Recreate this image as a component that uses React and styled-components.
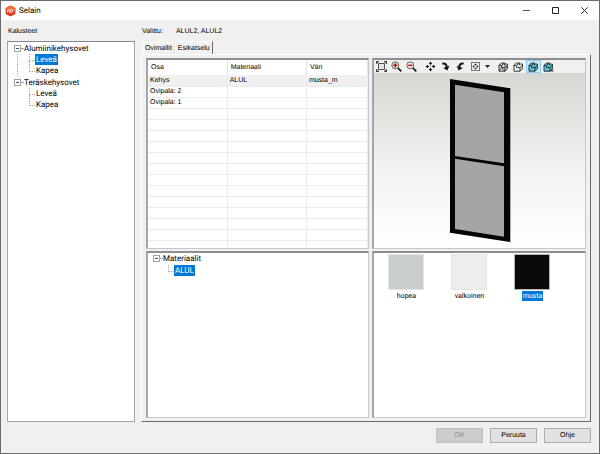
// App.jsx
import React, { useState } from 'react';
import styled, { createGlobalStyle } from 'styled-components';

const GlobalStyle = createGlobalStyle`
  * {
    box-sizing: border-box;
  }

  body {
    margin: 0;
    background-color: #f0f0f0;
    color: #000;
    font-family: "Liberation Sans", Arial, sans-serif;
    font-size: 7px;
    line-height: 9px;
    text-rendering: geometricPrecision;
  }

  button {
    margin: 0;
    padding: 0;
    border: none;
    background: none;
    color: inherit;
    font: inherit;
    text-rendering: inherit;
  }
`;

const Window = styled.div`
  display: flex;
  flex-direction: column;
  min-height: 100vh;
  border: 1px solid #6b6b6b;
  background-color: #f0f0f0;
`;

const TitleBar = styled.header`
  display: flex;
  align-items: center;
  height: 19px;
  padding-left: 4px;
  background-color: #fff;
`;

const WindowTitle = styled.h1`
  flex: 1;
  margin: 0 0 0 3px;
  font-family: Roboto, sans-serif;
  font-size: 8px;
  font-weight: normal;
`;

const WindowButton = styled.button`
  display: flex;
  align-items: center;
  justify-content: center;
  width: 29px;
  height: 19px;
`;

const Body = styled.main`
  flex: 1;
  display: grid;
  grid-template-columns: 128fr 450fr;
  column-gap: 6px;
  padding: 5px 8px 0 6px;
`;

const Column = styled.section`
  display: flex;
  flex-direction: column;
  min-width: 0;
`;

const Caption = styled.div`
  display: flex;
  gap: 13px;
  height: 16px;
  padding: 2px 1px 0;
`;

const Pane = styled.div`
  min-width: 0;
  min-height: 0;
  overflow: hidden;
  border: 1px solid #a3a6ad;
  border-top-color: #828790;
  background-color: #fff;
`;

const SunkenPane = styled(Pane)`
  border: 2px solid #c4c7ce;
  border-top-color: #8e8e92;
  border-left-color: #a4a6ac;
  border-right-width: 1px;
  border-bottom-width: 1px;
`;

const TreePane = styled(Pane)`
  flex: 1;
  padding-left: 6px;
`;

const MaterialPane = styled(SunkenPane)`
  padding-left: 5px;
`;

const TreeList = styled.ul`
  margin: 0;
  padding: 0;
  list-style: none;
  font-family: Roboto, sans-serif;
  font-size: 8px;
`;

const TreeRow = styled.div`
  display: flex;
  align-items: center;
  height: ${({ $head }) => ($head ? '12px' : '11px')};
`;

const Expander = styled.button`
  display: flex;
  align-items: center;
  justify-content: center;
  width: 7px;
  height: 7px;
  border: 1px solid #a0a0a0;
  background-color: #fff;

  &::before {
    content: '';
    width: 3px;
    height: 1px;
    background-color: #3c4f9c;
  }
`;

const Dash = styled.span`
  width: 2px;
  border-top: 1px dotted #a8a8a8;
`;

const Rail = styled.span`
  width: 12px;
  height: 11px;
  margin-left: 3px;
  border-left: 1px dotted ${({ $visible }) => ($visible ? '#a8a8a8' : 'transparent')};
`;

const Elbow = styled.span`
  display: flex;
  flex-direction: column;
  width: 6px;
  height: 11px;

  &::before {
    content: '';
    height: 6px;
    border-left: 1px dotted #a8a8a8;
    border-bottom: 1px dotted #a8a8a8;
  }

  &::after {
    content: '';
    flex: 1;
    border-left: 1px dotted ${({ $last }) => ($last ? 'transparent' : '#a8a8a8')};
  }
`;

const TreeLabel = styled.button`
  height: 11px;
  padding: 0 1px;
  line-height: 11px;
  white-space: nowrap;
  background-color: ${({ $selected }) => ($selected ? '#0078d7' : 'transparent')};
  color: ${({ $selected }) => ($selected ? '#fff' : '#000')};
`;

const TabList = styled.div`
  display: flex;
  align-items: flex-end;
  height: 13px;
  padding-left: 1px;
`;

const Tab = styled.button`
  height: ${({ $active }) => ($active ? '13px' : '12px')};
  padding: 0 2px;
  border-top: 1px solid #fff;
  border-left: 1px solid #fff;
  border-right: 1px solid ${({ $active }) => ($active ? '#696969' : '#dcdcdc')};
`;

const TabPanel = styled.div`
  flex: 1;
  display: grid;
  grid-template-columns: 224fr 214fr;
  grid-template-rows: 192fr 168fr;
  gap: 2px 3px;
  padding: 3px 4px 3px;
  border: 1px solid #fff;
  border-right-color: #696969;
  border-bottom-color: #696969;
`;

const PartsTable = styled.table`
  width: 100%;
  border-collapse: collapse;
  table-layout: fixed;
`;

const HeadCell = styled.th`
  width: ${({ $width }) => $width};
  height: 15px;
  padding: 0 3px;
  border-right: 1px solid #e4e4e4;
  font-weight: normal;
  text-align: left;
`;

const Row = styled.tr`
  background-color: ${({ $selected }) => ($selected ? '#f0f0f0' : '#fff')};
`;

const Cell = styled.td`
  height: 11px;
  padding: 0 2px;
  border-right: 1px solid #ececec;
  border-bottom: 1px solid #ececec;
  white-space: nowrap;
`;

const TableScroll = styled.div`
  height: 0;
  min-height: 100%;
  overflow: hidden;
`;

const Viewer = styled(SunkenPane)`
  display: flex;
  flex-direction: column;
`;

const Toolbar = styled.div`
  display: flex;
  align-items: center;
  height: 13px;
  background-color: #f0f0f0;
`;

const ToolButton = styled.button`
  display: flex;
  align-items: center;
  justify-content: center;
  width: ${({ $narrow }) => ($narrow ? '9px' : '15px')};
  height: 13px;
  border: 1px solid ${({ $active }) => ($active ? '#90c8f6' : 'transparent')};
  background-color: ${({ $active }) => ($active ? '#cce8ff' : 'transparent')};

  svg {
    flex-shrink: 0;
  }
`;

const ToolGap = styled.span`
  width: 4px;
`;

const Scene = styled.div`
  flex: 1;
  display: flex;
  justify-content: center;
  align-items: center;
  padding-top: 2px;
  background: linear-gradient(#d5d8d2, #f0f1ef 50%, #fff);
`;

const Swatches = styled.div`
  display: flex;
  flex-wrap: wrap;
  gap: 27px;
  padding: 1px 14px;
`;

const Swatch = styled.button`
  display: flex;
  flex-direction: column;
  align-items: center;
  gap: 1px;
  width: 36px;
  font-family: Roboto, sans-serif;
`;

const SwatchColor = styled.span`
  width: 36px;
  height: 36px;
  border: 1px solid ${({ $selected }) => ($selected ? '#b4b4b4' : '#e2e6e5')};
  background-color: ${({ $color }) => $color};
`;

const SwatchName = styled.span`
  padding: 0 1px;
  line-height: 10px;
  background-color: ${({ $selected }) => ($selected ? '#0078d7' : 'transparent')};
  color: ${({ $selected }) => ($selected ? '#fff' : '#000')};
`;

const Footer = styled.footer`
  display: flex;
  justify-content: flex-end;
  gap: 7px;
  padding: 6px 8px 10px;
`;

const DialogButton = styled.button`
  width: 47px;
  height: 15px;
  border: 1px solid #adadad;
  background-color: #e1e1e1;

  &:disabled {
    border-color: #bfbfbf;
    background-color: #ccc;
    color: #8c8c8c;
  }
`;

const Logo = () => (
  <svg width="11" height="12" viewBox="0 0 11 12" aria-hidden="true">
    <path d="M5.5 .4 10.4 3v6L5.5 11.6.6 9V3z" fill="#e8391d" />
    <path d="M5.5 .4 10.4 3v3L.6 4V3z" fill="#f26a35" />
    <path d="M2.6 4.5v3M2.6 6l1.6-1.4v3M5.6 4.6v2.9h1.2q1-.2 1-1.5t-1-1.4z" fill="none" stroke="#fff" strokeWidth=".8" />
  </svg>
);

const FitIcon = () => (
  <svg width="11" height="11" viewBox="0 0 11 11" aria-hidden="true">
    <rect x="2.5" y="2.5" width="6" height="6" fill="#e4e4e4" stroke="#555" />
    <path d="M.5 3V.5H3M8 .5h2.5V3M10.5 8v2.5H8M3 10.5H.5V8M.5.5l2 2M10.5.5l-2 2M10.5 10.5l-2-2M.5 10.5l2-2" fill="none" stroke="#333" strokeWidth=".9" />
  </svg>
);

const ZoomIcon = ({ plus }) => (
  <svg width="11" height="11" viewBox="0 0 11 11" aria-hidden="true">
    <circle cx="4.3" cy="4.3" r="3.5" fill="#f3e4e2" stroke="#555" strokeWidth=".9" />
    <path d="M7 7l3.3 3.3" stroke="#111" strokeWidth="1.7" />
    <path d={plus ? 'M2.2 4.3h4.2M4.3 2.2v4.2' : 'M2.2 4.3h4.2'} stroke="#b3140f" strokeWidth="1.4" />
  </svg>
);

const PanIcon = () => (
  <svg width="11" height="11" viewBox="0 0 11 11" aria-hidden="true">
    <path d="M5.5 .5 7.3 3H3.7zM5.5 10.5 7.3 8H3.7zM.5 5.5 3 3.7v3.6zM10.5 5.5 8 3.7v3.6z" fill="#111" />
    <path d="M5.5 3v1.2M5.5 6.8V8M3 5.5h1.2M6.8 5.5H8" stroke="#111" />
  </svg>
);

const RotateRightIcon = () => (
  <svg width="9" height="9" viewBox="0 0 9 9" aria-hidden="true">
    <path d="M1.4 1.6Q5.6 1 5.6 5" fill="none" stroke="#111" strokeWidth="2" />
    <path d="M8.4 3.8 6.4 8.6 2.2 6z" fill="#111" />
  </svg>
);

const RotateLeftIcon = () => (
  <svg width="9" height="9" viewBox="0 0 9 9" aria-hidden="true">
    <path d="M7.6 1.6Q3.4 1 3.4 5" fill="none" stroke="#111" strokeWidth="2" />
    <path d="M.6 3.8 2.6 8.6 6.8 6z" fill="#111" />
  </svg>
);

const CenterIcon = () => (
  <svg width="9" height="9" viewBox="0 0 9 9" aria-hidden="true">
    <rect x=".5" y=".5" width="8" height="8" fill="#eee" stroke="#777" />
    <path d="M4.5 1.5 6 3.2H3zM4.5 7.5 6 5.8H3zM1.5 4.5 3.2 3v3zM7.5 4.5 5.8 3v3z" fill="#222" />
  </svg>
);

const ArrowIcon = () => (
  <svg width="5" height="3" viewBox="0 0 5 3" aria-hidden="true">
    <path d="M0 0h5L2.5 3z" fill="#222" />
  </svg>
);

// L-shaped block: low step in front, taller part behind it
const ModelIcon = ({ fill, mesh, shadow }) => (
  <svg width="11" height="10" viewBox="0 0 11 10" aria-hidden="true">
    {shadow && <path d="M6 9.6h5L8.6 6z" fill="#555" />}
    <path d="M1 3.4 3.4 1h3v2L7.6 2h1.8v4.8L7 9.2H1z" fill={fill} stroke="#222" strokeWidth=".9" />
    <path d="M1 3.4h2.6v2.2H7v3.6M3.6 3.4 6.4 1M7 5.6l2.4-2.2" fill="none" stroke="#222" strokeWidth=".9" />
    {mesh && <path d="M1 9l2.6-3.4M3.6 5.6 7 9.2M6.4 3l3 3" stroke="#333" strokeWidth=".8" />}
  </svg>
);

const Door = () => (
  <svg width="62" height="166" viewBox="449 78 62 166" role="img" aria-label="Esikatselu">
    <path d="M450 79l60.3 9.3V242L450 232.7z" fill="#050505" />
    <path d="M455 84.7l49 7.6v71L455 156zM455 158.7l49 7.6v70.4L455 229z" fill="#a5a5a5" />
  </svg>
);

const Tree = ({ label, groups, selected, onSelect }) => (
  <TreeList aria-label={label}>
    {groups.map((group, groupIndex) => (
      <li key={group.name}>
        <TreeRow $head>
          <Expander aria-label={group.name} aria-expanded="true" />
          <Dash />
          <TreeLabel>{group.name}</TreeLabel>
        </TreeRow>
        <TreeList>
          {group.items.map((item, index) => {
            const id = `${group.name}/${item}`;
            return (
              <li key={id}>
                <TreeRow>
                  <Rail $visible={groupIndex < groups.length - 1} />
                  <Elbow $last={index === group.items.length - 1} />
                  <TreeLabel $selected={selected === id} onClick={() => onSelect(id)}>{item}</TreeLabel>
                </TreeRow>
              </li>
            );
          })}
        </TreeList>
      </li>
    ))}
  </TreeList>
);

const furniture = [
  { name: 'Alumiinikehysovet', items: ['Leveä', 'Kapea'] },
  { name: 'Teräskehysovet', items: ['Leveä', 'Kapea'] },
];

const materials = [{ name: 'Materiaalit', items: ['ALUL'] }];

const parts = [
  ['Kehys', 'ALUL', 'musta_m'],
  ['Ovipala: 2', '', ''],
  ['Ovipala: 1', '', ''],
  ...Array.from({ length: 13 }, () => ['', '', '']),
];

const colors = [
  { name: 'hopea', color: '#c8cecc' },
  { name: 'valkoinen', color: '#ededed' },
  { name: 'musta', color: '#0a0a0a' },
];

const App = () => {
  const [model, setModel] = useState('Alumiinikehysovet/Leveä');
  const [material, setMaterial] = useState('Materiaalit/ALUL');
  const [color, setColor] = useState('musta');
  const [tab, setTab] = useState('Esikatselu');

  return (
    <>
      <GlobalStyle />
      <Window>
        <TitleBar>
          <Logo />
          <WindowTitle>Selain</WindowTitle>
          <WindowButton aria-label="Pienennä">
            <svg width="7" height="7" viewBox="0 0 7 7"><path d="M0 3.5h7" stroke="#555" /></svg>
          </WindowButton>
          <WindowButton aria-label="Suurenna">
            <svg width="7" height="7" viewBox="0 0 7 7"><path d="M.5.5h6v6h-6z" fill="none" stroke="#222" /></svg>
          </WindowButton>
          <WindowButton aria-label="Sulje">
            <svg width="7" height="7" viewBox="0 0 7 7"><path d="M.3.3l6.4 6.4M6.7.3.3 6.7" stroke="#222" /></svg>
          </WindowButton>
        </TitleBar>

        <Body>
          <Column>
            <Caption>Kalusteet</Caption>
            <TreePane>
              <Tree label="Kalusteet" groups={furniture} selected={model} onSelect={setModel} />
            </TreePane>
          </Column>

          <Column>
            <Caption>
              <span>Valittu:</span>
              <span>ALUL2, ALUL2</span>
            </Caption>
            <TabList role="tablist">
              {['Ovimallit', 'Esikatselu'].map((name) => (
                <Tab key={name} role="tab" aria-selected={tab === name} $active={tab === name} onClick={() => setTab(name)}>
                  {name}
                </Tab>
              ))}
            </TabList>
            <TabPanel role="tabpanel">
              <SunkenPane>
                <TableScroll>
                  <PartsTable>
                    <thead>
                      <tr>
                        <HeadCell $width="36%">Osa</HeadCell>
                        <HeadCell $width="36%">Materiaali</HeadCell>
                        <HeadCell $width="28%">Väri</HeadCell>
                      </tr>
                    </thead>
                    <tbody>
                      {parts.map((part, index) => (
                        <Row key={index} $selected={index === 0}>
                          {part.map((value, cell) => (
                            <Cell key={cell}>{value}</Cell>
                          ))}
                        </Row>
                      ))}
                    </tbody>
                  </PartsTable>
                </TableScroll>
              </SunkenPane>

              <Viewer>
                <Toolbar role="toolbar">
                  <ToolButton aria-label="Sovita"><FitIcon /></ToolButton>
                  <ToolButton aria-label="Lähennä"><ZoomIcon plus /></ToolButton>
                  <ToolButton aria-label="Loitonna"><ZoomIcon /></ToolButton>
                  <ToolGap />
                  <ToolButton aria-label="Siirrä"><PanIcon /></ToolButton>
                  <ToolButton aria-label="Kierrä oikealle"><RotateRightIcon /></ToolButton>
                  <ToolButton aria-label="Kierrä vasemmalle"><RotateLeftIcon /></ToolButton>
                  <ToolButton aria-label="Keskitä"><CenterIcon /></ToolButton>
                  <ToolButton aria-label="Suunnat" $narrow><ArrowIcon /></ToolButton>
                  <ToolGap />
                  <ToolButton aria-label="Rautalanka"><ModelIcon fill="#ddd" mesh /></ToolButton>
                  <ToolButton aria-label="Piiloviivat"><ModelIcon fill="#f4f4f4" /></ToolButton>
                  <ToolButton aria-label="Varjostettu" $active><ModelIcon fill="#5cc3dc" /></ToolButton>
                  <ToolButton aria-label="Varjot"><ModelIcon fill="#5cc3dc" shadow /></ToolButton>
                </Toolbar>
                <Scene>
                  <Door />
                </Scene>
              </Viewer>

              <MaterialPane>
                <Tree label="Materiaalit" groups={materials} selected={material} onSelect={setMaterial} />
              </MaterialPane>

              <SunkenPane>
                <Swatches>
                  {colors.map((item) => (
                    <Swatch key={item.name} aria-pressed={color === item.name} onClick={() => setColor(item.name)}>
                      <SwatchColor $color={item.color} $selected={color === item.name} />
                      <SwatchName $selected={color === item.name}>{item.name}</SwatchName>
                    </Swatch>
                  ))}
                </Swatches>
              </SunkenPane>
            </TabPanel>
          </Column>
        </Body>

        <Footer>
          <DialogButton disabled>OK</DialogButton>
          <DialogButton>Peruuta</DialogButton>
          <DialogButton>Ohje</DialogButton>
        </Footer>
      </Window>
    </>
  );
};

export default App;
